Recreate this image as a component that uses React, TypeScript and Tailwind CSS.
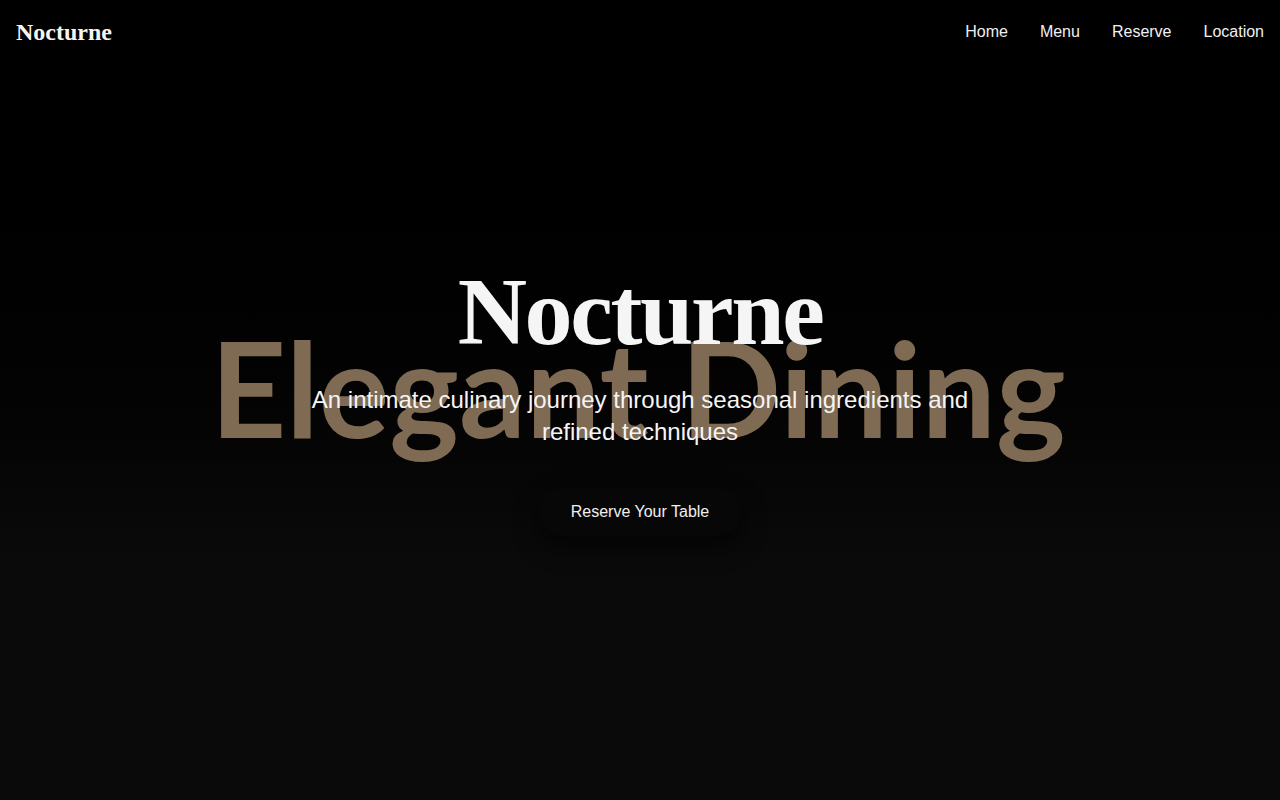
import React from 'react'

const navLinks = ['Home', 'Menu', 'Reserve', 'Location']

export default function App() {
  return (
    <div className="relative min-h-screen bg-gradient-to-b from-black from-5% to-[#0a0a0a] to-70% text-white font-['Liberation_Sans',Arial,sans-serif]">
      {/* Header */}
      <header className="absolute top-0 left-0 right-0 z-20 flex items-center justify-between px-4 py-4">
        <a className="text-2xl font-bold font-['Liberation_Serif','Times_New_Roman',serif] text-[#f5f5f5]">
          Nocturne
        </a>
        <nav className="flex gap-8 text-base text-[#f0f0f0]">
          {navLinks.map((link) => (
            <a key={link}>{link}</a>
          ))}
        </nav>
      </header>

      {/* Hero */}
      <section className="relative flex h-screen items-center justify-center overflow-hidden">
        <div className="pointer-events-none absolute inset-0 flex items-center justify-center">
          <span className="-translate-x-[2px] -translate-y-[13px] whitespace-nowrap text-[132px] leading-none font-bold text-[#7f6b53] font-['Lato',sans-serif]">
            Elegant Dining
          </span>
        </div>

        <div className="relative z-10 flex flex-col items-center text-center">
          <h1 className="mb-6 text-8xl leading-none font-bold tracking-tight text-[#f5f5f5] font-['Liberation_Serif','Times_New_Roman',serif]">
            Nocturne
          </h1>
          <p className="max-w-2xl text-2xl text-[#f5f5f5]">
            An intimate culinary journey through seasonal ingredients and refined techniques
          </p>
          <button className="mt-10 rounded-full bg-[#070707] px-8 py-3 text-base text-[#f0f0f0] shadow-[0_10px_25px_rgba(0,0,0,0.6)]">
            Reserve Your Table
          </button>
        </div>
      </section>
    </div>
  )
}
